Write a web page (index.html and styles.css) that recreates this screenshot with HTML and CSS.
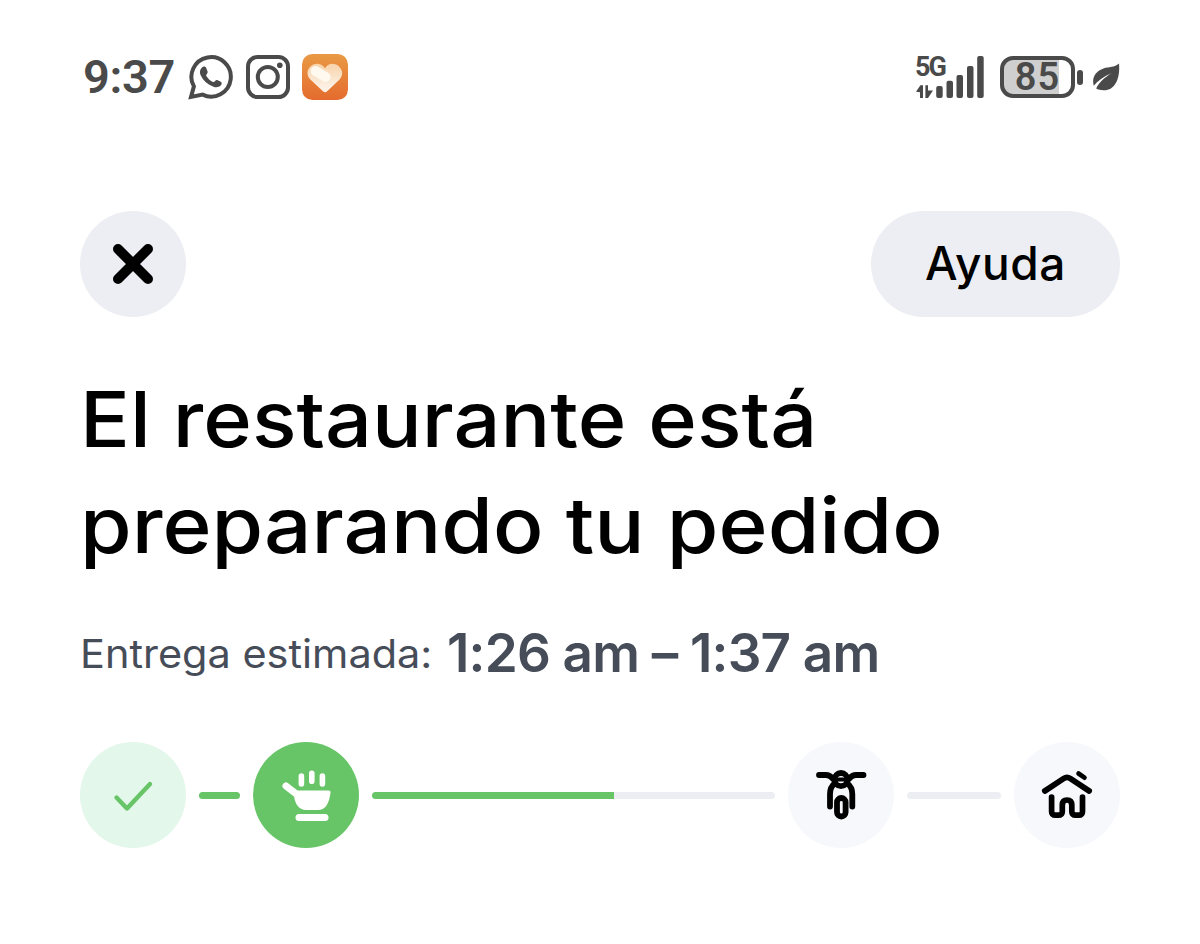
FILE: index.html
```html
<!DOCTYPE html>
<html lang="es">
<head>
  <meta charset="UTF-8">
  <meta name="viewport" content="width=device-width, initial-scale=1.0">
  <title>Estado del pedido</title>
  <link rel="stylesheet" href="styles.css">
</head>
<body>
  <div class="status-bar">
    <div class="status-left">
      <span class="clock">9:37</span>
      <svg class="app-icon" viewBox="0 0 46 46">
        <path d="M5.9 32.4 A19.7 19.7 0 1 1 14.6 40.6 L3 43 Z" fill="none" stroke="#4a4a4a" stroke-width="4" stroke-linejoin="miter"/>
        <path d="M14 13.5 C15.5 12 17.5 12.3 18.2 14 L19.5 17.3 C20 18.5 19.5 19.3 18.5 20.4 C18 21 18 21.5 18.5 22.2 C20.2 24.9 22.3 26.7 25 27.9 C25.9 28.3 26.3 28 26.9 27.3 C27.9 26 28.5 25.7 29.7 26.2 L32.8 27.8 C34.1 28.5 34 30.3 32.7 31.6 C31 33.3 28.3 33.8 25.5 32.8 C19.5 30.7 15.3 26.7 12.9 21.8 C11.3 18.5 11.7 15.5 14 13.5 Z" fill="#4a4a4a"/>
      </svg>
      <svg class="app-icon" viewBox="0 0 46 46">
        <rect x="3" y="3" width="40" height="40" rx="9.5" fill="none" stroke="#4a4a4a" stroke-width="4"/>
        <circle cx="22.8" cy="23" r="10" fill="none" stroke="#4a4a4a" stroke-width="4"/>
        <circle cx="34.8" cy="11.3" r="2.8" fill="#4a4a4a"/>
      </svg>
      <svg class="app-icon" viewBox="0 0 46 46">
        <defs>
          <linearGradient id="tile" x1="0" y1="0" x2="0" y2="1">
            <stop offset="0" stop-color="#e99a45"/>
            <stop offset="1" stop-color="#e46b2e"/>
          </linearGradient>
          <linearGradient id="heart" x1="0" y1="0" x2="0" y2="1">
            <stop offset="0" stop-color="#f8d3a8"/>
            <stop offset="0.8" stop-color="#fcefe3"/>
          </linearGradient>
        </defs>
        <rect width="46" height="46" rx="10.5" fill="url(#tile)"/>
        <path d="M23 14.2 C26 9 32 8.4 36 11.6 C41.3 15.8 41.2 21.8 37.6 25.4 L25.2 37.2 C23.8 38.5 22.3 38.5 20.9 37.2 L8.4 25.4 C4.5 21.5 4.6 15.7 8.6 12.2 C13 8.4 19.4 9 23 14.2 Z" fill="url(#heart)"/>
        <path d="M13.5 17 L23.5 23" stroke="#fff9f0" stroke-width="10" stroke-linecap="round"/>
      </svg>
    </div>

    <div class="status-right">
      <div class="network">
        <span class="network-type">5G</span>
        <svg class="signal" viewBox="0 0 70 44">
          <g fill="#4a4a4a">
            <path d="M1 36.8 L5.4 30.2 H8 V43 H5 V37.3 Z"/>
            <path d="M10.4 30.2 H13 V35.6 H18 L13 43 H10.4 Z"/>
            <rect x="21.2" y="31" width="6.5" height="12" rx="2"/>
            <rect x="31.5" y="25.7" width="6.5" height="17.3" rx="2"/>
            <rect x="41.5" y="20" width="6.5" height="23" rx="2"/>
            <rect x="52" y="11" width="6.5" height="32" rx="2"/>
            <rect x="62.2" y="1" width="6.5" height="42" rx="2"/>
          </g>
        </svg>
      </div>
      <div class="battery"><span>85</span></div>
      <div class="battery-tip"></div>
      <svg class="leaf" viewBox="0 0 28 28">
        <path d="M27 .6 C28.2 13 24.5 27.6 11.5 27.3 C8.5 27.2 6 26.6 4.2 25.6 C6.5 20 12 14.7 19.8 9.9 C11.5 13.5 5.5 17.8 1.8 22.7 C-.6 15 3.6 8 11.5 5.5 C17 3.7 22.5 4.7 27 .6 Z" fill="#4a4a4a"/>
      </svg>
    </div>
  </div>

  <header class="top-actions">
    <button class="close" aria-label="Cerrar">
      <svg viewBox="0 0 106 106">
        <path d="M38 38 L68 68 M68 38 L38 68" stroke="#000" stroke-width="10" stroke-linecap="round"/>
      </svg>
    </button>
    <button class="help">Ayuda</button>
  </header>

  <h1><span class="line-one">El restaurante está</span><br><span class="line-two">preparando tu pedido</span></h1>

  <p class="eta"><span class="eta-label">Entrega estimada:</span> <strong>1:26 am – 1:37 am</strong></p>

  <div class="progress">
    <div class="step done">
      <svg viewBox="0 0 106 106">
        <path d="M36.5 55.5 L47 66.5 L70 42" fill="none" stroke="#67c568" stroke-width="4.4" stroke-linecap="round" stroke-linejoin="round"/>
      </svg>
    </div>
    <div class="line line-short full"></div>
    <div class="step active">
      <svg viewBox="0 0 106 106">
        <g fill="none" stroke="#fff" stroke-linecap="round">
          <path d="M48.4 34 V42 M58.8 31.2 V39.2 M69.4 34 V42" stroke-width="5.6"/>
          <path d="M33 44 L44 52.5" stroke-width="7"/>
          <path d="M46 75.5 H72" stroke-width="7"/>
        </g>
        <path d="M41 48.5 H75.5 Q78 48.5 77.5 51 C76 61 73 68 65 68 H53 C45.5 68 42 61.5 41 54 Z" fill="#fff"/>
      </svg>
    </div>
    <div class="line half"></div>
    <div class="step">
      <svg viewBox="0 0 106 106">
        <g fill="none" stroke="#000" stroke-width="5.8" stroke-linecap="round" stroke-linejoin="round">
          <path d="M31 33 H38 Q41.5 33 44 36 L47 38.5 M75.5 33 H68 Q64.5 33 62 36 L59 38.5"/>
          <circle cx="53" cy="37.6" r="6.6"/>
          <path d="M46 37.6 H60" stroke-width="4"/>
          <path d="M47 41 Q42 45 42 52 V64.5 M59 41 Q64.3 45 64.3 52 V64.5"/>
          <rect x="49" y="56" width="8.6" height="18.5" rx="4.3"/>
        </g>
      </svg>
    </div>
    <div class="line line-mid"></div>
    <div class="step">
      <svg viewBox="0 0 106 106">
        <g fill="none" stroke="#000" stroke-width="5.7" stroke-linecap="round" stroke-linejoin="round">
          <path d="M30.8 49 L49.5 36.6 Q53 34.2 56.5 36.6 L75.2 49"/>
          <path d="M64.5 31.5 L70.5 35.7" stroke-width="4.6"/>
          <path d="M37.6 55 V69.5 Q37.6 73.2 41.5 73.2 H44.3 Q48.3 73.2 48.3 69.5 V63 Q48.3 58 53 58 Q57.8 58 57.8 63 V69.5 Q57.8 73.2 61.8 73.2 H64.6 Q68.5 73.2 68.5 69.5 V55"/>
        </g>
      </svg>
    </div>
  </div>
</body>
</html>
```
FILE: styles.css
```css
* {
  box-sizing: border-box;
}
body {
  margin: 0;
  padding: 54px 80px 0;
  background: #fff;
  color: #000;
  font-family: Inter, "Liberation Sans", sans-serif;
}
svg {
  display: block;
}

/* phone status bar */
.status-bar {
  display: flex;
  justify-content: space-between;
  height: 46px;
  color: #4a4a4a;
  font-family: Roboto, sans-serif;
}
.status-left,
.status-right {
  display: flex;
  align-items: center;
}
.status-left {
  padding-left: 3px;
}
.clock {
  width: 105px;
  font-size: 47px;
  font-weight: 600;
  line-height: 48px;
  letter-spacing: -0.3px;
}
.app-icon {
  width: 46px;
  height: 46px;
  margin-right: 11px;
}
.network {
  position: relative;
  width: 70px;
  height: 44px;
  margin-right: 15px;
}
.network-type {
  position: absolute;
  left: 0;
  top: 1px;
  font-size: 27px;
  font-weight: 700;
  line-height: 22px;
  letter-spacing: -2px;
}
.battery {
  width: 75px;
  height: 42px;
  border: 4px solid #4a4a4a;
  border-radius: 13px;
  background: linear-gradient(to right, #cfcfcf 82%, #fff 82%);
  font-size: 38px;
  font-weight: 600;
  line-height: 35px;
  letter-spacing: 1px;
  text-align: center;
}
.battery-tip {
  width: 6px;
  height: 15px;
  margin: 0 9px 0 2px;
  border-radius: 3px;
  background: #4a4a4a;
}
.leaf {
  width: 28px;
  height: 28px;
}

.top-actions {
  display: flex;
  justify-content: space-between;
  margin-top: 111px;
}
button {
  padding: 0;
  border: 0;
  background: #edeef3;
  color: #000;
  font-family: inherit;
  cursor: pointer;
}
.close {
  width: 106px;
  height: 106px;
  border-radius: 50%;
}
.help {
  width: 249px;
  height: 106px;
  padding-bottom: 3px;
  border-radius: 53px;
  font-size: 46px;
  font-weight: 500;
  letter-spacing: 0.6px;
}

h1 {
  margin: 49px 0 0;
  font-size: 77px;
  font-weight: 500;
  line-height: 106px;
  white-space: nowrap;
}
.line-one,
.line-two,
.eta-label {
  display: inline-block;
  transform-origin: left;
}
.line-one {
  transform: scaleX(1.075);
}
.line-two {
  transform: scaleX(1.086);
}
.eta {
  display: flex;
  align-items: center;
  height: 80px;
  margin: 35px 0 0;
  color: #464d59;
  font-size: 39px;
  white-space: nowrap;
}
.eta-label {
  width: 367px;
  transform: scaleX(1.063);
}
.eta strong {
  font-size: 53px;
  font-weight: 600;
  letter-spacing: -0.8px;
}

/* order progress */
.progress {
  display: flex;
  align-items: center;
  gap: 13px;
  margin-top: 49px;
}
.step {
  flex: none;
  width: 106px;
  height: 106px;
  border-radius: 50%;
  background: #f7f8fb;
}
.step.done {
  background: #e3f7eb;
}
.step.active {
  background: #67c568;
}
.line {
  flex: 1;
  height: 7px;
  border-radius: 4px;
  background: #edeef3;
}
.line-short {
  flex: none;
  width: 41px;
}
.line-mid {
  flex: none;
  width: 94px;
}
.line.full {
  background: #67c568;
}
.line.half {
  background: linear-gradient(to right, #67c568 60%, #edeef3 60%);
}
```
